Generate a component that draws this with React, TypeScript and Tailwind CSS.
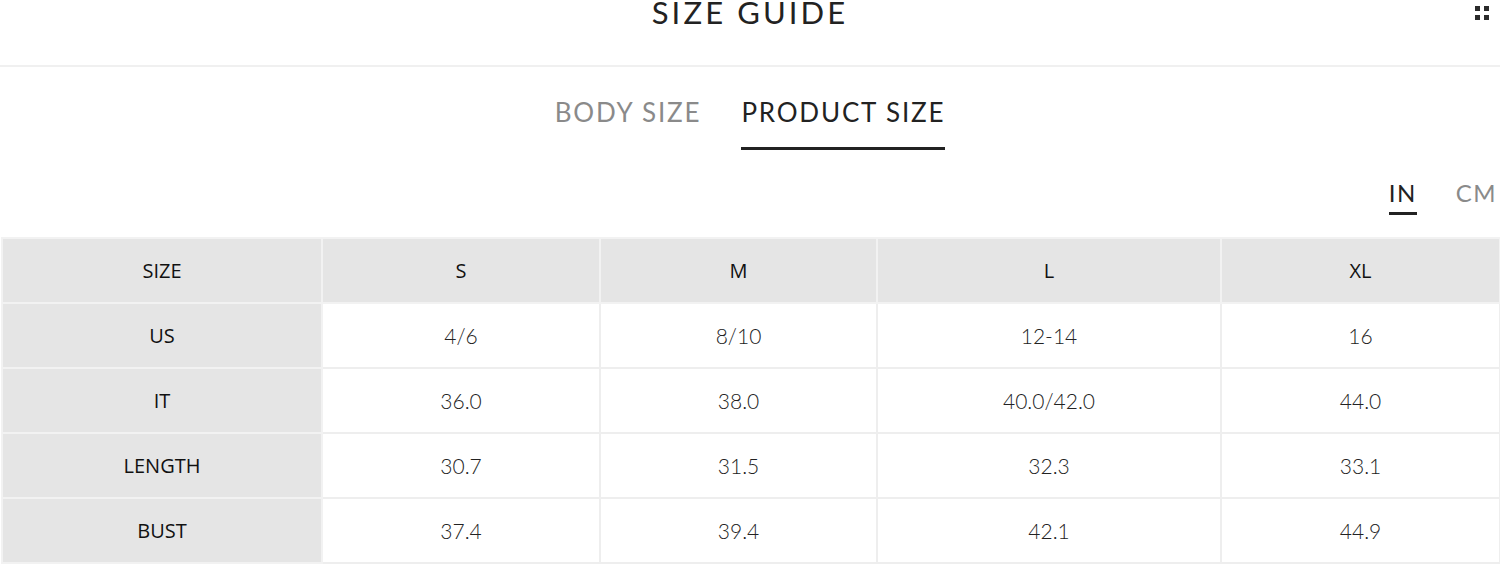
const columns = ["S", "M", "L", "XL"];

const rows = [
  { label: "US", values: ["4/6", "8/10", "12-14", "16"] },
  { label: "IT", values: ["36.0", "38.0", "40.0/42.0", "44.0"] },
  { label: "LENGTH", values: ["30.7", "31.5", "32.3", "33.1"] },
  { label: "BUST", values: ["37.4", "39.4", "42.1", "44.9"] },
];

const avenir = "font-['Lato','Open_Sans',sans-serif]";
const labelFont = "font-['Open_Sans','Noto_Sans',sans-serif]";

function MenuDots() {
  return (
    <div className="absolute right-[11px] top-[9px] grid grid-cols-2 gap-[4px]">
      <span className="h-[5px] w-[5px] bg-[#2b2b2b]" />
      <span className="h-[5px] w-[5px] bg-[#2b2b2b]" />
      <span className="h-[5px] w-[5px] bg-[#2b2b2b]" />
      <span className="h-[5px] w-[5px] bg-[#2b2b2b]" />
    </div>
  );
}

export default function App() {
  return (
    <div className={`w-[1500px] h-[567px] overflow-hidden bg-white ${avenir}`}>
      {/* header */}
      <div className="relative h-[70px] border-b-2 border-[#f0f0f0]">
        <h1 className="mt-[-3px] text-center text-[31px] leading-none tracking-[0.1em] text-[#222]">
          SIZE GUIDE
        </h1>
        <MenuDots />
      </div>

      {/* tabs */}
      <div className="flex justify-center gap-[40px] pt-[32px] text-[26px] leading-none tracking-[0.07em]">
        <button className="pb-[22px] border-b-[3px] border-transparent text-[#8a8a8a]">
          BODY SIZE
        </button>
        <button className="pb-[22px] border-b-[3px] border-[#222] text-[#222]">
          PRODUCT SIZE
        </button>
      </div>

      {/* units */}
      <div className="mt-[31px] flex justify-end gap-[39px] pr-[3px] text-[24px] leading-none tracking-[0.06em]">
        <button className="pb-[7px] border-b-[3px] border-[#222] text-[#222]">IN</button>
        <button className="pb-[7px] border-b-[3px] border-transparent text-[#8a8a8a]">CM</button>
      </div>

      {/* table */}
      <div className="mt-[22px] px-[1px]">
        <table className="w-[1498px] table-fixed border-collapse">
          <colgroup>
            <col className="w-[320px]" />
            <col className="w-[278px]" />
            <col className="w-[277px]" />
            <col className="w-[344px]" />
            <col className="w-[279px]" />
          </colgroup>
          <thead>
            <tr className="h-[65px] bg-[#e5e5e5]">
              <th className={`border-2 border-[#f2f2f2] text-[20px] font-medium text-[#111] ${labelFont}`}>
                SIZE
              </th>
              {columns.map((c) => (
                <th
                  key={c}
                  className={`border-2 border-[#f2f2f2] text-[20px] font-medium text-[#111] ${labelFont}`}
                >
                  {c}
                </th>
              ))}
            </tr>
          </thead>
          <tbody>
            {rows.map((r) => (
              <tr key={r.label} className="h-[65px]">
                <td
                  className={`border-2 border-[#f2f2f2] bg-[#e5e5e5] text-center text-[20px] font-medium text-[#111] ${labelFont}`}
                >
                  {r.label}
                </td>
                {r.values.map((v, i) => (
                  <td
                    key={i}
                    className="border-2 border-[#eeeeee] text-center text-[21px] font-light text-[#222]"
                  >
                    {v}
                  </td>
                ))}
              </tr>
            ))}
          </tbody>
        </table>
      </div>
    </div>
  );
}
